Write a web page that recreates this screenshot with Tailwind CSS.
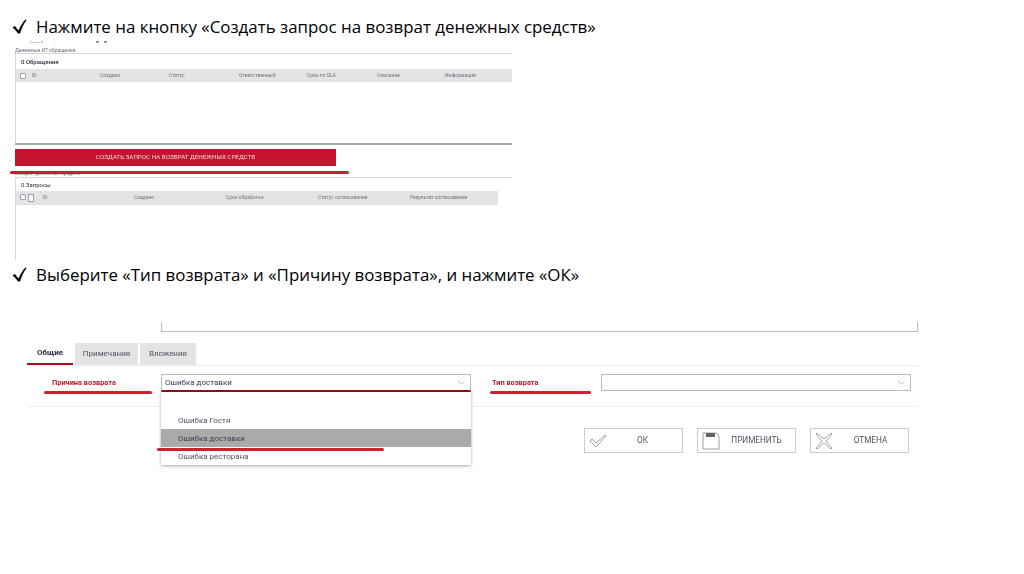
<!DOCTYPE html>
<html lang="ru">
<head>
<meta charset="UTF-8" />
<script src="https://cdn.jsdelivr.net/npm/@tailwindcss/browser@4"></script>
</head>
<body class="bg-white">
<div class="relative w-[1024px] h-[574px] overflow-hidden bg-white font-['Open_Sans',sans-serif] text-black">

	<!-- Step 1 -->
	<div class="flex items-center h-[20px] mt-[17px] ml-[12px]">
		<svg width="24" height="20" viewBox="0 0 24 20" class="shrink-0"><path d="M.5 10.5 2.8 9 6.5 13.5C8.5 9 11 5 13.6 2.2L14.5 3C11.5 7 9.5 12 8 16.5H6C4.5 14 2.5 12 .5 10.5Z" fill="#000"/></svg>
		<span class="text-[16.9px] leading-[20px] whitespace-nowrap">Нажмите на кнопку «Создать запрос на возврат денежных средств»</span>
	</div>

	<!-- cropped leftovers above the first screenshot -->
	<div class="absolute left-[30px] top-[40px] w-[13px] h-[3px] border-x border-b border-[#cccccc]"></div>
	<div class="absolute left-[96px] top-[41px] flex gap-[5px]">
		<span class="w-[3px] h-[2px] bg-[#999999]"></span>
		<span class="w-[3px] h-[2px] bg-[#999999]"></span>
	</div>

	<div class="ml-[15px] w-[497px] mt-[6px] font-['Roboto',sans-serif] blur-[0.4px]">
		<div class="h-[10px] pt-[3px] text-[5px] leading-[8px] text-gray-500">Денежные ИТ обращения</div>
		<div class="border-t border-l border-[#d8d8d8] h-[90px]">
			<div class="h-[15px] pl-[5px] text-[6px] leading-[15px] font-medium text-gray-800">0 Обращения</div>
			<div class="flex items-center h-[13px] bg-[#e4e4e4] text-[5px] text-gray-500">
				<span class="w-[16px] pl-[4px]"><span class="block w-[6px] h-[6px] bg-white border border-gray-400 rounded-[1px]"></span></span>
				<span class="w-[68px]">ID</span>
				<span class="w-[69px]">Создано</span>
				<span class="w-[70px]">Статус</span>
				<span class="w-[68px]">Ответственный</span>
				<span class="w-[70px]">Срок по SLA</span>
				<span class="w-[68px]">Описание</span>
				<span>Информация</span>
			</div>
		</div>
		<div class="h-[2px] bg-[#a9a9a9]"></div>
		<div class="flex items-center justify-center w-[321px] h-[17px] mt-[4px] bg-[#c3152f] text-[6.25px] text-[#f2d5da]">СОЗДАТЬ ЗАПРОС НА ВОЗВРАТ ДЕНЕЖНЫХ СРЕДСТВ</div>
		<div class="h-[11px] pt-[4px] text-[5px] leading-[7px] text-gray-500">Возврат денежных средств</div>
		<div class="border-t border-l border-[#d8d8d8] h-[83px]">
			<div class="h-[13px] pl-[5px] text-[6px] leading-[13px] text-gray-800">0 Запросы</div>
			<div class="flex items-center h-[14px] w-[482px] bg-[#e4e4e4] text-[5px] text-gray-500">
				<span class="w-[27px] pl-[4px] flex gap-[2px]">
					<span class="block w-[6px] h-[6px] bg-white border border-gray-400 rounded-[1px]"></span>
					<span class="block w-[6px] h-[8px] bg-white border border-gray-400"></span>
				</span>
				<span class="w-[91px]">ID</span>
				<span class="w-[92px]">Создано</span>
				<span class="w-[92px]">Срок обработки</span>
				<span class="w-[92px]">Статус согласования</span>
				<span>Результат согласования</span>
			</div>
		</div>
	</div>

	<!-- red underline over the button -->
	<div class="absolute left-[10px] top-[171px] w-[339px] h-[3px] rounded-full bg-[#c9202f]"></div>

	<!-- Step 2 -->
	<div class="flex items-center h-[20px] mt-[5px] ml-[12px]">
		<svg width="24" height="20" viewBox="0 0 24 20" class="shrink-0"><path d="M.5 10.5 2.8 9 6.5 13.5C8.5 9 11 5 13.6 2.2L14.5 3C11.5 7 9.5 12 8 16.5H6C4.5 14 2.5 12 .5 10.5Z" fill="#000"/></svg>
		<span class="text-[16.9px] leading-[20px] whitespace-nowrap">Выберите «Тип возврата» и «Причину возврата», и нажмите «ОК»</span>
	</div>

	<div class="font-['Roboto',sans-serif]">
		<div class="ml-[161px] w-[757px] h-[10px] mt-[37px] border-x border-b border-[#bdbdbd]"></div>

		<div class="flex ml-[27px] mt-[11px] gap-[2px] text-[8px] h-[22px] blur-[0.3px]">
			<div class="flex items-center justify-center w-[46px] border-b-[2px] border-[#a3121f] font-bold text-gray-800">Общие</div>
			<div class="flex items-center justify-center w-[63px] bg-[#e4e4e4] text-gray-600">Примечания</div>
			<div class="flex items-center justify-center w-[56px] bg-[#e4e4e4] text-gray-600">Вложения</div>
		</div>

		<div class="flex ml-[27px] w-[891px] h-[42px] pt-[8px] border-y border-[#eeeeee] text-[7.4px] blur-[0.3px]">
			<div class="w-[134px] pl-[25px] pt-[3px] font-bold text-[#b3202c]">Причина возврата</div>
			<div class="flex items-center justify-between w-[310px] h-[18px] px-[3px] bg-white border border-[#bbbbbb] border-b-[2px] border-b-[#8f1019] text-gray-700 text-[8px]">
				<span>Ошибка доставки</span>
				<svg width="7" height="4" viewBox="0 0 7 4" class="mr-[2px]"><path d="M.5.5 3.5 3.5 6.5.5" fill="none" stroke="#aaa" stroke-width=".8"/></svg>
			</div>
			<div class="w-[130px] pl-[21px] pt-[3px] font-bold text-[#b3202c]">Тип возврата</div>
			<div class="flex items-center justify-end w-[310px] h-[17px] px-[5px] bg-white border border-[#bbbbbb]">
				<svg width="7" height="4" viewBox="0 0 7 4"><path d="M.5.5 3.5 3.5 6.5.5" fill="none" stroke="#aaa" stroke-width=".8"/></svg>
			</div>
		</div>

		<div class="flex justify-end gap-[14px] w-[909px] mt-[21px] text-[8.2px] text-gray-600 blur-[0.3px]">
			<div class="flex items-center w-[99px] h-[25px] px-[4px] bg-white border border-[#cccccc]">
				<svg width="18" height="14" viewBox="0 0 18 14" fill="none" stroke="#888" stroke-width=".8"><path d="M1 7 3 5 7 9 16 1 17 2 7 13Z"/></svg>
				<span class="flex-1 text-center pl-[6px] pr-[6px]">ОК</span>
			</div>
			<div class="flex items-center w-[99px] h-[25px] px-[4px] bg-white border border-[#cccccc]">
				<svg width="18" height="18" viewBox="0 0 18 18" fill="none" stroke="#888" stroke-width=".8"><path d="M1 1H14L17 4V17H1Z"/><rect x="4" y="1" width="9" height="4" fill="#666" stroke="none"/></svg>
				<span class="flex-1 text-center pl-[6px] pr-[4px]">ПРИМЕНИТЬ</span>
			</div>
			<div class="flex items-center w-[99px] h-[25px] px-[4px] bg-white border border-[#cccccc]">
				<svg width="18" height="18" viewBox="0 0 18 18" fill="none" stroke="#888" stroke-width=".8"><path d="M2 1 9 7 16 1 17 2 11 9 17 16 16 17 9 11 2 17 1 16 7 9 1 2Z"/></svg>
				<span class="flex-1 text-center pl-[6px] pr-[2px]">ОТМЕНА</span>
			</div>
		</div>

		<!-- open dropdown -->
		<div class="absolute left-[161px] top-[392px] w-[310px] h-[73px] pt-[19px] bg-white shadow-[0_1px_3px_rgba(0,0,0,0.35)] text-[8px] text-gray-600 blur-[0.3px]">
			<div class="h-[18px] pl-[17px] leading-[19px]">Ошибка Гостя</div>
			<div class="h-[18px] pl-[17px] leading-[19px] bg-[#aaaaaa] text-gray-700">Ошибка доставки</div>
			<div class="h-[18px] pl-[17px] leading-[19px]">Ошибка ресторана</div>
		</div>

		<!-- red marker strokes -->
		<div class="absolute left-[44px] top-[391px] w-[108px] h-[3px] rounded-full bg-[#d0202c]"></div>
		<div class="absolute left-[490px] top-[391px] w-[101px] h-[3px] rounded-full bg-[#d0202c]"></div>
		<div class="absolute left-[157px] top-[448px] w-[227px] h-[3px] rounded-full bg-[#d0202c]"></div>
	</div>
</div>
</body>
</html>
